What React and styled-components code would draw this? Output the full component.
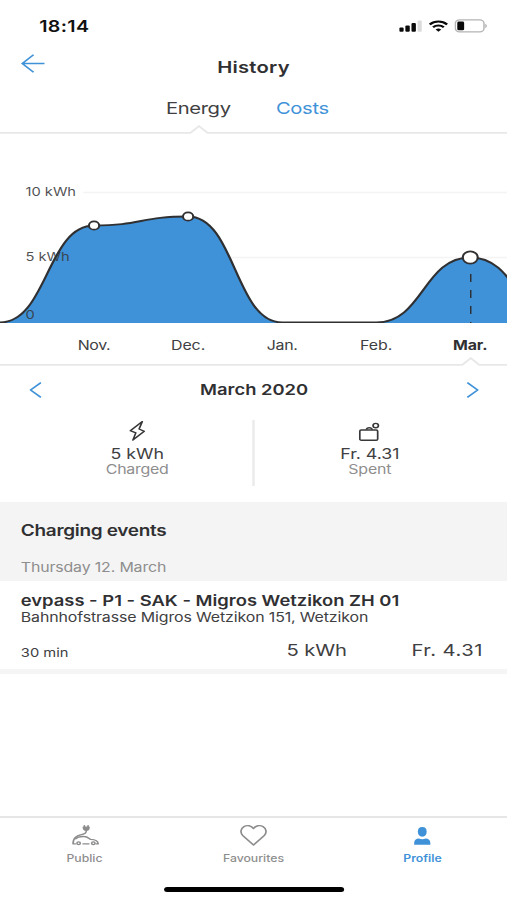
import React from 'react';
import styled, { createGlobalStyle } from 'styled-components';

const GlobalStyle = createGlobalStyle`
  * {
    box-sizing: border-box;
  }
  body {
    margin: 0;
    background: #fff;
    overflow: hidden;
  }
`;

const Screen = styled.div`
  display: flex;
  flex-direction: column;
  width: 414px;
  height: 900px;
  background: #fff;
  color: #404042;
  font-family: Inter, "Liberation Sans", sans-serif;
  transform: scaleX(1.22464);
  transform-origin: 0 0;
`;

const Text = styled.span`
  display: block;
  white-space: nowrap;
  font-size: ${(p) => p.$size}px;
  line-height: ${(p) => p.$line || 16}px;
  font-weight: ${(p) => p.$weight || 400};
  letter-spacing: ${(p) => p.$spacing || 0}px;
  color: ${(p) => p.$color || (p.$weight ? '#303032' : 'inherit')};
`;

const StatusBar = styled.div`
  display: flex;
  align-items: center;
  justify-content: space-between;
  height: 52px;
  padding: 0 16px 0 32px;
`;

const StatusIcons = styled.div`
  display: flex;
  align-items: center;
  gap: 5px;
`;

const Header = styled.header`
  display: grid;
  grid-template-columns: 1fr auto 1fr;
  align-items: start;
  height: 44px;
  padding: 1px 17px 0;
`;

const BackButton = styled.button`
  justify-self: start;
  display: flex;
  padding: 0;
  border: 0;
  background: none;
`;

const Title = styled.h1`
  margin: 6px 0 0;
  font-weight: inherit;
`;

const Tabs = styled.nav`
  display: flex;
  gap: 37px;
  height: 29px;
  padding: 4px 0 0 135.5px;
`;

const Notch = styled.svg`
  display: block;
  flex: none;
  width: 414px;
  height: 9px;
  fill: none;
  stroke: #e8e8e8;
  stroke-width: 1.8;
`;

const Chart = styled.svg`
  display: block;
  flex: none;
  width: 414px;
  height: 189px;
`;

const AxisLabel = styled.text`
  font-size: 12px;
  fill: #38383a;
  fill-opacity: 0.88;
`;

const Months = styled.div`
  display: grid;
  grid-template-columns: repeat(5, 76.8px);
  justify-items: center;
  height: 34px;
  padding: 13px 0 0 38.4px;
`;

const MonthPicker = styled.div`
  display: flex;
  align-items: center;
  justify-content: space-between;
  height: 47px;
  padding: 0 23px 0 24px;
`;

const Summary = styled.section`
  display: flex;
  height: 89px;
  padding-top: 7px;
`;

const Stat = styled.div`
  flex: 1;
  display: flex;
  flex-direction: column;
  align-items: center;
  padding-right: ${(p) => p.$right || 0}px;
  padding-left: ${(p) => p.$left || 0}px;

  svg {
    margin-bottom: 4px;
  }
`;

const Divider = styled.div`
  width: 2px;
  height: 66px;
  background: #ebebeb;
`;

const EventsHeader = styled.section`
  display: flex;
  flex-direction: column;
  gap: 20px;
  height: 79px;
  padding: 21px 17px 0;
  background: #f4f4f4;
`;

const Event = styled.article`
  height: 93px;
  padding: 11px 17px 0;
  border-bottom: 5px solid #f5f5f5;
`;

const EventValues = styled.div`
  display: grid;
  grid-template-columns: 217px 102px auto;
  align-items: start;
  margin-top: 17px;
`;

const Duration = styled.div`
  padding-top: 3px;
`;

const TabBar = styled.nav`
  display: grid;
  grid-template-columns: repeat(3, 1fr);
  height: 84px;
  margin-top: auto;
  border-top: 2px solid #e6e6e6;
`;

const TabItem = styled.a`
  display: flex;
  flex-direction: column;
  align-items: center;
  gap: 6px;
  padding-top: 6px;
  color: ${(p) => (p.$active ? '#3f92d8' : '#8c8c8c')};
`;

const HomeIndicator = styled.div`
  position: absolute;
  left: 133.5px;
  bottom: 8px;
  width: 147.5px;
  height: 5px;
  border-radius: 3px;
  background: #000;
`;

const BLUE = '#3f92d8';
const LINE = '#303032';
const GREY = '#8e8e8e';
const STEP = 76.8;
const BASE = 188.5;

const months = [
  { name: 'Nov.', y: 91.5, spacing: -0.3, dot: 4.2 },
  { name: 'Dec.', y: 82.5, spacing: -0.05, dot: 4.2 },
  { name: 'Jan.', y: BASE, spacing: -0.25 },
  { name: 'Feb.', y: BASE, spacing: 0 },
  { name: 'Mar.', y: 123.5, spacing: -0.1, dot: 6.1, active: true },
];

const points = [BASE, ...months.map((m) => m.y), BASE];

const curve = points.reduce((d, y, i) => {
  if (i === 0) return `M0 ${y}`;
  const x = i * STEP;
  return `${d} C${x - STEP / 2} ${points[i - 1]} ${x - STEP / 2} ${y} ${x} ${y}`;
}, '');

const BackArrow = () => (
  <svg width="20" height="20" viewBox="0 0 20 20" fill="none" stroke={BLUE} strokeWidth="1.5">
    <path d="M19.3 10.5H1.5M10.4 1.8L1.2 10.5l9.2 8.7" />
  </svg>
);

const Chevron = ({ right }) => (
  <svg width="10" height="16" viewBox="0 0 10 16" fill="none" stroke={BLUE} strokeWidth="1.5">
    <path d={right ? 'M0.6 0.6L9 8l-8.4 7.4' : 'M9.4 0.6L1 8l8.4 7.4'} />
  </svg>
);

const Signal = () => (
  <svg width="19" height="12" viewBox="0 0 19 12" fill="#0a0a0a">
    <rect x="0" y="7.4" width="3.6" height="4.4" rx="1" />
    <rect x="5" y="5.5" width="3.6" height="6.3" rx="1" />
    <rect x="10" y="2.9" width="3.6" height="8.9" rx="1" />
    <rect x="15" y="0.4" width="3.4" height="11.4" rx="1" fill="#dcdcdc" />
  </svg>
);

const Wifi = () => (
  <svg width="16" height="12" viewBox="0 0 16 12" fill="none" stroke="#0a0a0a" strokeWidth="2.1">
    <path d="M0.9 4.4a10.3 10.3 0 0 1 14.2 0" />
    <path d="M3.6 7.3a6.4 6.4 0 0 1 8.8 0" />
    <path d="M8 11.8L5.7 9.5a3.4 3.4 0 0 1 4.6 0z" fill="#0a0a0a" stroke="none" />
  </svg>
);

const Battery = () => (
  <svg width="27" height="14" viewBox="0 0 27 14">
    <rect x="0.8" y="0.9" width="23.4" height="12" rx="3.4" fill="none" stroke="#b4b4b4" strokeWidth="1.2" />
    <rect x="2.4" y="2.6" width="5.6" height="8.6" rx="1.3" fill="#0a0a0a" />
    <path d="M25.3 4.9c1.5.5 1.5 3.5 0 4z" fill="#a8a8a8" />
  </svg>
);

const Bolt = () => (
  <svg width="14" height="22" viewBox="0 0 14 22" fill="none" stroke="#38383a" strokeWidth="1.4" strokeLinejoin="round">
    <path d="M11.2 1.6L1.4 10.7l4.5 2.2-2.4 7.2 9.3-8.8-4.2-2.3z" />
  </svg>
);

const Wallet = () => (
  <svg width="18" height="22" viewBox="0 0 18 22" fill="none" stroke="#38383a" strokeWidth="1.4">
    <rect x="0.8" y="10" width="14.6" height="10.2" rx="1.2" />
    <path d="M6.2 9.700c.3-2.600 4.300-2.600 4.700 0" />
    <circle cx="13.8" cy="5.6" r="2.2" />
  </svg>
);

const Car = () => (
  <svg width="22" height="22" viewBox="-1.2 0 22 22" overflow="visible" fill="none" stroke="currentColor" strokeWidth="1.3" strokeLinecap="round" strokeLinejoin="round">
    <path d="M9.7 1.6v1.6M12.7 1.6v1.6" />
    <path d="M8.9 3.2h4.6c0 1.8-.8 3-2.3 3s-2.3-1.2-2.3-3z" fill="currentColor" />
    <path d="M11.2 6.2C12.4 13.4.6 7.2.4 19.8h2" />
    <path d="M2.6 14.8c1.6-2.2 4-2.4 6.8-2.3 2.6 0 3.8 1.6 5.4 2.9 3.8.2 6 1 6.2 4.4h-1.6" />
    <circle cx="5" cy="19.3" r="1.4" />
    <circle cx="17" cy="19.3" r="1.4" />
    <path d="M8.6 19.8h4.8" />
  </svg>
);

const Heart = () => (
  <svg width="22" height="22" viewBox="0 0 22 22" fill="none" stroke="currentColor" strokeWidth="1.4" strokeLinejoin="round">
    <path d="M11 21L2.4 11.8C-.3 8.7.6 4.5 3.2 2.6c2.6-1.9 6.2-1 7.8 2 1.6-3 5.2-3.9 7.8-2 2.6 1.9 3.5 6.1.8 9.2z" />
  </svg>
);

const Person = () => (
  <svg width="22" height="22" viewBox="0 0 22 22" fill="currentColor">
    <path d="M10.8 3c2.6 0 3.6 1.8 3.6 4.6s-1.3 5.2-3.6 5.200-3.600-2.400-3.600-5.200S8.200 3 10.800 3z" />
    <path d="M4.200 20.800v-1.800c0-2.600 1.600-4.400 3.800-4.400 1.800.8 3.800.8 5.600 0 2.200 0 3.800 1.800 3.800 4.400v1.800z" />
  </svg>
);

const NotchLine = ({ x }) => (
  <Notch viewBox="0 0 414 9">
    <path d={`M0 7.900H${x - 7}L${x} 1.200L${x + 7} 7.900H414`} />
  </Notch>
);

const HistoryChart = () => (
  <Chart viewBox="0 0 414 189">
    <path d="M68 58.5H414M66 123.5H414" stroke="#f4f4f4" strokeWidth="1.3" />
    <path d={`${curve} V189 H0Z`} fill={BLUE} />
    <AxisLabel x="20.8" y="61.6">10 kWh</AxisLabel>
    <AxisLabel x="20.8" y="126.6">5 kWh</AxisLabel>
    <AxisLabel x="20.8" y="184.6">0</AxisLabel>
    <path d={curve} fill="none" stroke={LINE} strokeWidth="1.9" />
    <path d={`M${5 * STEP + 0.4} 140V189`} stroke={LINE} strokeWidth="1.2" strokeDasharray="8 8" />
    {months.map((m, i) => m.dot && (
      <circle key={m.name} cx={(i + 1) * STEP} cy={m.y} r={m.dot} fill="#fff" stroke={LINE} strokeWidth="1.7" />
    ))}
  </Chart>
);

const App = () => {
  return (
    <Screen>
      <GlobalStyle />
      <StatusBar>
        <Text $size={16} $weight={600} $spacing={0.3} $color="#111">18:14</Text>
        <StatusIcons>
          <Signal />
          <Wifi />
          <Battery />
        </StatusIcons>
      </StatusBar>

      <Header>
        <BackButton aria-label="Back">
          <BackArrow />
        </BackButton>
        <Title>
          <Text $size={16.5} $weight={600} $spacing={0.2}>History</Text>
        </Title>
      </Header>

      <Tabs>
        <Text $size={16.5} $spacing={-0.3}>Energy</Text>
        <Text $size={16.5} $spacing={-0.3} $color={BLUE}>Costs</Text>
      </Tabs>
      <NotchLine x={162.5} />

      <HistoryChart />
      <Months>
        {months.map((m) => (
          <Text key={m.name} $size={13} $line={18} $weight={m.active && 700} $spacing={m.spacing}>
            {m.name}
          </Text>
        ))}
      </Months>
      <NotchLine x={384.4} />

      <MonthPicker>
        <Chevron />
        <Text $size={15} $weight={600}>March 2020</Text>
        <Chevron right />
      </MonthPicker>

      <Summary>
        <Stat $left={18}>
          <Bolt />
          <Text $size={14.5} $line={15}>5 kWh</Text>
          <Text $size={13} $line={16} $spacing={-0.2} $color={GREY}>Charged</Text>
        </Stat>
        <Divider />
        <Stat $right={18}>
          <Wallet />
          <Text $size={14.5} $line={15}>Fr. 4.31</Text>
          <Text $size={13} $line={16} $spacing={-0.1} $color={GREY}>Spent</Text>
        </Stat>
      </Summary>

      <EventsHeader>
        <Text $size={15.5} $weight={600} $spacing={-0.25}>Charging events</Text>
        <Text $size={13} $spacing={-0.13} $color={GREY}>Thursday 12. March</Text>
      </EventsHeader>

      <Event>
        <Text $size={15} $weight={600} $line={17}>evpass - P1 - SAK - Migros Wetzikon ZH 01</Text>
        <Text $size={13} $spacing={-0.1}>Bahnhofstrasse Migros Wetzikon 151, Wetzikon</Text>
        <EventValues>
          <Duration>
            <Text $size={12}>30 min</Text>
          </Duration>
          <Text $size={16.5} $spacing={-0.1}>5 kWh</Text>
          <Text $size={16.5} $spacing={0.4}>Fr. 4.31</Text>
        </EventValues>
      </Event>

      <TabBar>
        <TabItem>
          <Car />
          <Text $size={10} $line={13} $color={GREY} $weight={500}>Public</Text>
        </TabItem>
        <TabItem>
          <Heart />
          <Text $size={10} $line={13} $color={GREY} $weight={500}>Favourites</Text>
        </TabItem>
        <TabItem $active>
          <Person />
          <Text $size={10} $line={13} $color={BLUE} $weight={600}>Profile</Text>
        </TabItem>
      </TabBar>
      <HomeIndicator />
    </Screen>
  );
};

export default App;
